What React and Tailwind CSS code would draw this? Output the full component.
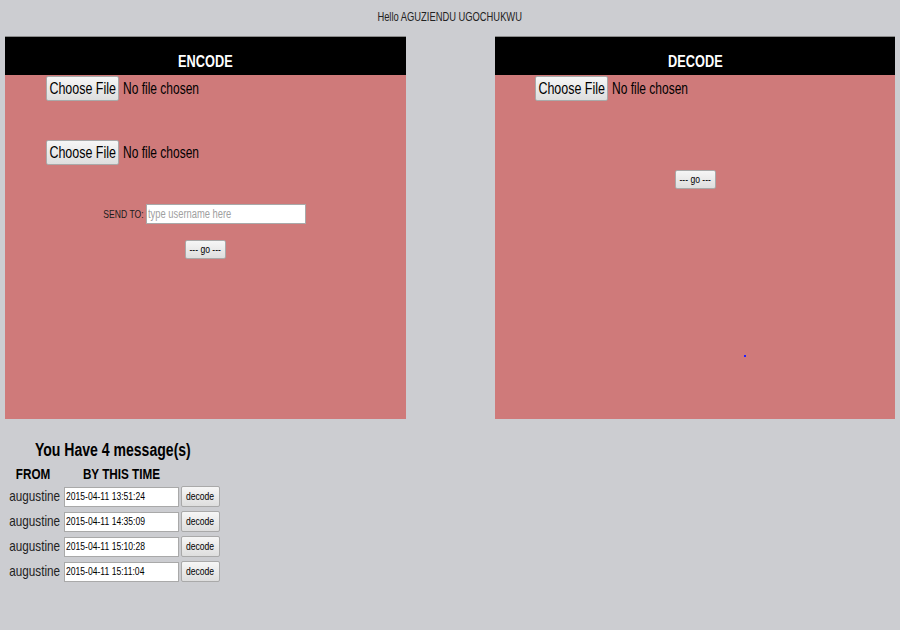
const messages = [
  { from: "augustine", time: "2015-04-11 13:51:24" },
  { from: "augustine", time: "2015-04-11 14:35:09" },
  { from: "augustine", time: "2015-04-11 15:10:28" },
  { from: "augustine", time: "2015-04-11 15:11:04" },
];

function N({ children, className = "origin-center" }) {
  return <span className={"inline-block whitespace-nowrap scale-x-[0.78] " + className}>{children}</span>;
}

function FileInput() {
  return (
    <div className="flex items-center h-[25px]">
      <button className="w-[73px] h-[25px] flex items-center justify-center border border-[#a9a9a9] rounded-[2px] bg-gradient-to-b from-[#f6f6f6] to-[#dedede] text-[16px] text-black leading-none">
        <N>Choose File</N>
      </button>
      <span className="ml-[4px] text-[16px] text-black leading-none">
        <span className="inline-block whitespace-nowrap scale-x-[0.75] origin-left">No file chosen</span>
      </span>
    </div>
  );
}

function GoButton() {
  return (
    <button className="h-[19px] w-[41px] flex items-center justify-center border border-[#a9a9a9] rounded-[2px] bg-gradient-to-b from-[#f6f6f6] to-[#dedede] text-[11px] text-black leading-none">
      <N>--- go ---</N>
    </button>
  );
}

function PanelHeader({ title }) {
  return (
    <div className="h-[39px] bg-black border-t border-[#8a8a8a] flex items-end justify-center pb-[5px]">
      <span className="text-white font-bold text-[17px] leading-none">
        <span className="inline-block whitespace-nowrap scale-x-[0.75] origin-center">{title}</span>
      </span>
    </div>
  );
}

export default function App() {
  return (
    <div className="w-[900px] h-[630px] bg-[#cccdd1] font-['Liberation_Sans',Arial,sans-serif] text-[#222]">
      {/* greeting */}
      <div className="h-[36px] pt-[11px] flex justify-center text-[12px] leading-none">
        <N>Hello AGUZIENDU UGOCHUKWU</N>
      </div>

      {/* panels */}
      <div className="flex justify-between px-[5px]">
        <div className="w-[401px] h-[383px] flex flex-col">
          <PanelHeader title="ENCODE" />
          <div className="flex-1 bg-[#cf7a7a] pl-[41px] pt-[1px]">
            <FileInput />
            <div className="mt-[39px]">
              <FileInput />
            </div>
            <div className="-ml-[41px] mt-[39px] flex items-center justify-center">
              <span className="w-[38px] text-[11px] text-[#1a1a1a] flex justify-end">
                <N className="origin-right">SEND TO:</N>
              </span>
              <div className="ml-[2px] w-[160px] h-[20px] bg-white border border-[#a9a9a9] px-[1px] text-[12px] text-[#a0a0a0] flex items-center">
                <N className="origin-left">type username here</N>
              </div>
            </div>
            <div className="-ml-[41px] mt-[16px] flex justify-center">
              <GoButton />
            </div>
          </div>
        </div>

        <div className="w-[400px] h-[383px] flex flex-col">
          <PanelHeader title="DECODE" />
          <div className="flex-1 bg-[#cf7a7a] pl-[40px] pt-[1px] relative">
            <FileInput />
            <div className="-ml-[40px] mt-[69px] flex justify-center">
              <GoButton />
            </div>
            <div className="absolute left-[249px] top-[280px] w-[2px] h-[2px] bg-[#2020ff]" />
          </div>
        </div>
      </div>

      {/* messages */}
      <div className="w-[215px] ml-[5px] mt-[22px]">
        <div className="flex justify-center font-bold text-[18px] text-black leading-none">
          <N>You Have 4 message(s)</N>
        </div>
        <div className="grid grid-cols-[57px_115px_39px] gap-x-[2px] items-center mt-[7px]">
          <div className="flex justify-center font-bold text-[15px] text-black leading-none h-[18px]">
            <N>FROM</N>
          </div>
          <div className="flex justify-center font-bold text-[15px] text-black leading-none h-[18px]">
            <N>BY THIS TIME</N>
          </div>
          <div />
          {messages.map((m, i) => (
            <div key={i} className="contents">
              <div className="text-[15px] text-[#222] h-[25px] pr-[2px] flex items-center justify-end">
                <N className="origin-right">{m.from}</N>
              </div>
              <div className="w-[115px] h-[20px] bg-white border border-[#a9a9a9] px-[1px] text-[11px] text-black flex items-center">
                <N className="origin-left">{m.time}</N>
              </div>
              <button className="w-[39px] h-[21px] flex items-center justify-center border border-[#a9a9a9] rounded-[2px] bg-gradient-to-b from-[#f6f6f6] to-[#dedede] text-[11px] text-black leading-none">
                <N>decode</N>
              </button>
            </div>
          ))}
        </div>
      </div>
    </div>
  );
}
